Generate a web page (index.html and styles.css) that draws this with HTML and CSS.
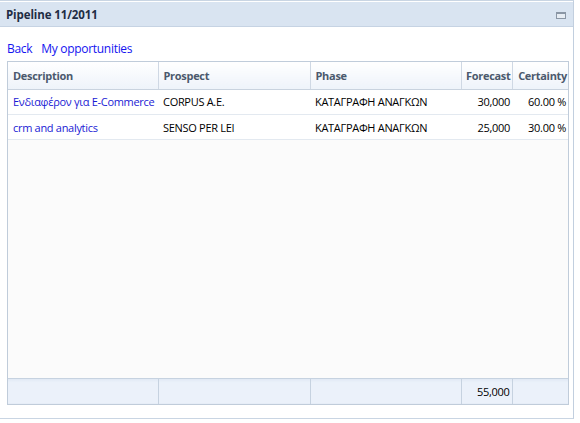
FILE: index.html
```html
<!DOCTYPE html>
<html>
<head>
<meta charset="utf-8">
<link rel="stylesheet" href="styles.css">
</head>
<body>
<div class="panel">
  <div class="panel-head">
    <span class="title">Pipeline 11/2011</span>
    <span class="max-icon"></span>
  </div>
  <div class="panel-body">
    <div class="links"><a href="#">Back</a><a href="#">My opportunities</a></div>
    <div class="grid">
      <table class="t head">
        <colgroup><col class="c1"><col class="c2"><col class="c3"><col class="c4"><col class="c5"></colgroup>
        <tr><th>Description</th><th>Prospect</th><th>Phase</th><th class="r">Forecast</th><th class="r">Certainty</th></tr>
      </table>
      <div class="rows">
        <table class="t body">
          <colgroup><col class="c1"><col class="c2"><col class="c3"><col class="c4"><col class="c5"></colgroup>
          <tr><td><a href="#">Ενδιαφέρον για E-Commerce</a></td><td>CORPUS A.E.</td><td>ΚΑΤΑΓΡΑΦΗ ΑΝΑΓΚΩΝ</td><td class="r">30,000</td><td class="r">60.00 %</td></tr>
          <tr><td><a href="#">crm and analytics</a></td><td>SENSO PER LEI</td><td>ΚΑΤΑΓΡΑΦΗ ΑΝΑΓΚΩΝ</td><td class="r">25,000</td><td class="r">30.00 %</td></tr>
        </table>
      </div>
      <table class="t foot">
        <colgroup><col class="c1"><col class="c2"><col class="c3"><col class="c4"><col class="c5"></colgroup>
        <tr><td></td><td></td><td></td><td class="r">55,000</td><td></td></tr>
      </table>
    </div>
  </div>
</div>
</body>
</html>
```

FILE: styles.css
```css
* { box-sizing: border-box; }
html, body { margin: 0; padding: 0; background: #fff; }
body { font-family: "Open Sans", "Noto Sans", sans-serif; width: 580px; height: 423px; overflow: hidden; }

.panel {
  width: 574px;
  height: 419px;
  border-top: 1px solid #c9d5e3;
  border-right: 1px solid #c2cfdf;
  border-bottom: 1px solid #c9d5e3;
  display: flex;
  flex-direction: column;
}
.panel-head {
  margin-top: 1px;
  height: 25px;
  background: #d9e4f1;
  border-bottom: 1px solid #c6d3e3;
  display: flex;
  align-items: center;
  justify-content: space-between;
  padding: 0 7px 0 6px;
}
.title {
  font-weight: 700;
  font-size: 11.5px;
  color: #1e2d44;
  letter-spacing: -0.1px;
}
.max-icon {
  width: 10px;
  height: 7px;
  border: 1px solid #8a96a5;
  border-top-width: 2px;
  background: #e6ecf3;
  margin-top: 2px;
}
.panel-body {
  flex: 1;
  padding: 14px 4px 12px 7px;
  display: flex;
  flex-direction: column;
}
.links {
  font-size: 12px;
  line-height: 16px;
  height: 20px;
  display: flex;
  gap: 9px;
  letter-spacing: -0.3px;
}
.links a { color: #1414f0; text-decoration: none; }

.grid {
  width: 562px;
  height: 344px;
  border: 1px solid #c0ccda;
  display: flex;
  flex-direction: column;
  background: #fbfbfb;
}
.t {
  width: 560px;
  border-collapse: collapse;
  table-layout: fixed;
  font-size: 11px;
  letter-spacing: -0.3px;
}
.c1 { width: 150px; }
.c2 { width: 152px; }
.c3 { width: 151px; }
.c4 { width: 51px; }
.c5 { width: 56px; }
.t th, .t td {
  padding: 0 5px;
  white-space: nowrap;
  overflow: hidden;
}
.t .r { text-align: right; padding-right: 2px; }
.head th {
  height: 27px;
  font-weight: 700;
  color: #4b596d;
  text-align: left;
  background: linear-gradient(#ffffff, #eef3fa);
  border-right: 1px solid #cfd8e4;
  border-bottom: 1px solid #c9d3df;
}
.head th.r { padding-right: 1px; padding-left: 0; }
.head th:last-child { border-right: none; }
.rows { flex: 1; background: #fbfbfb; }
.body { background: #fff; }
.body td {
  height: 25px;
  color: #000;
  border-bottom: 1px solid #e3e9f0;
}
.body td a { color: #1a1ad4; text-decoration: none; }
.foot td {
  height: 26px;
  background: linear-gradient(#dfe7f3, #ebf1fa 4px, #ebf1fa);
  border-top: 1px solid #c6d2e0;
  border-right: 1px solid #c6d2e0;
  color: #000;
}
.foot td:last-child { border-right: none; }
```
